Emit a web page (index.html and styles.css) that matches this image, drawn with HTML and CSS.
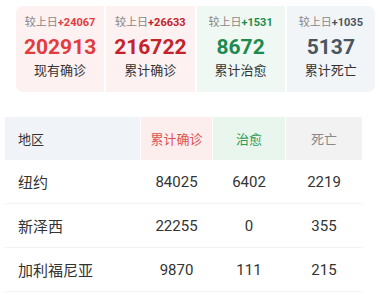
FILE: index.html
```html
<!DOCTYPE html>
<html lang="zh">
<head>
<meta charset="utf-8">
<link rel="stylesheet" href="styles.css">
</head>
<body>
<div class="cards">
  <div class="card card-now">
    <div class="delta">较上日<b>+24067</b></div>
    <div class="num">202913</div>
    <div class="label">现有确诊</div>
  </div>
  <div class="card card-total">
    <div class="delta">较上日<b>+26633</b></div>
    <div class="num">216722</div>
    <div class="label">累计确诊</div>
  </div>
  <div class="card card-cured">
    <div class="delta">较上日<b>+1531</b></div>
    <div class="num">8672</div>
    <div class="label">累计治愈</div>
  </div>
  <div class="card card-dead">
    <div class="delta">较上日<b>+1035</b></div>
    <div class="num">5137</div>
    <div class="label">累计死亡</div>
  </div>
</div>

<div class="table">
  <div class="row head">
    <div class="cell area h-area">地区</div>
    <div class="cell h-total">累计确诊</div>
    <div class="cell h-cured">治愈</div>
    <div class="cell h-dead">死亡</div>
  </div>
  <div class="row">
    <div class="cell area">纽约</div>
    <div class="cell">84025</div>
    <div class="cell">6402</div>
    <div class="cell">2219</div>
  </div>
  <div class="row">
    <div class="cell area">新泽西</div>
    <div class="cell">22255</div>
    <div class="cell">0</div>
    <div class="cell">355</div>
  </div>
  <div class="row">
    <div class="cell area">加利福尼亚</div>
    <div class="cell">9870</div>
    <div class="cell">111</div>
    <div class="cell">215</div>
  </div>
</div>
</body>
</html>
```

FILE: styles.css
```css
* { box-sizing: border-box; }
html, body { margin: 0; padding: 0; background: #fff; }
body {
  font-family: Roboto, "Noto Sans CJK SC", sans-serif;
  color: #333;
  padding-top: 6px;
}
.cards {
  display: flex;
  gap: 2px;
  margin-left: 16px;
  width: 359px;
  border-radius: 7px;
  overflow: hidden;
}
.card {
  flex: 1;
  height: 86px;
  padding-top: 9px;
  text-align: center;
}
.card-now, .card-total { background: #fdf1f1; }
.card-cured { background: #eff8f2; }
.card-dead { background: #f2f5f8; }
.delta {
  font-size: 11px;
  line-height: 16px;
  color: #888;
}
.delta b { font-weight: 700; }
.num {
  margin-top: 3px;
  font-size: 21px;
  line-height: 26px;
  font-weight: 700;
}
.label {
  margin-top: 2px;
  font-size: 13px;
  line-height: 17px;
  color: #333;
}
.card-now b, .card-now .num { color: #e23c3f; }
.card-total b, .card-total .num { color: #c3232b; }
.card-cured b, .card-cured .num { color: #1f8a4f; }
.card-dead b, .card-dead .num { color: #4b5560; }

.table {
  margin-top: 25px;
  margin-left: 5px;
  width: 357px;
}
.row {
  display: grid;
  grid-template-columns: 135px 71px 72px 76px;
  column-gap: 1px;
  height: 44px;
  border-bottom: 1px solid #f3f3f3;
  font-size: 15px;
  color: #333;
}
.row.head {
  height: 43px;
  border-bottom: 0;
  font-size: 13px;
}
.cell {
  display: flex;
  align-items: center;
  justify-content: center;
}
.cell.area {
  justify-content: flex-start;
  padding-left: 13px;
}
.h-area { background: #f0f4f8; color: #333; }
.h-total { background: #fdeeee; color: #d9534f; }
.h-cured { background: #e9f6ee; color: #2e9a5a; }
.h-dead { background: #f2f2f2; color: #888; }
```
